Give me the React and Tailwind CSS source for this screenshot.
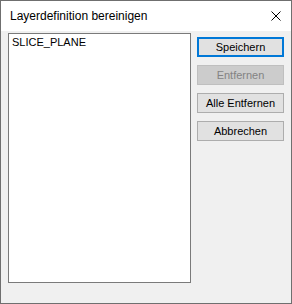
export default function App() {
  return (
    <div
      className="w-[292px] h-[304px] bg-[#f0f0f0] border border-[#6f6f6f] flex flex-col"
      style={{ fontFamily: '"Liberation Sans", Arial, sans-serif' }}
    >
      {/* Title bar */}
      <div className="h-[30px] bg-white flex items-center justify-between pl-[9px] pr-[9px]">
        <span className="text-[12px] text-black">Layerdefinition bereinigen</span>
        <svg width="10" height="10" viewBox="0 0 10 10" className="mr-[1px]">
          <path d="M0.5 0.5 L9.5 9.5 M9.5 0.5 L0.5 9.5" stroke="#000" strokeWidth="1" />
        </svg>
      </div>

      {/* Body */}
      <div className="flex pl-[7px] pt-[2px] gap-[6px]">
        <div className="w-[183px] h-[250px] bg-white border border-[#7a7a7a] px-[3px] pt-[2px]">
          <div className="text-[11px] leading-[13px] text-black">SLICE_PLANE</div>
        </div>

        <div className="flex flex-col gap-[8px] pt-[4px]">
          <button className="w-[87px] h-[20px] bg-[#e1e1e1] border-2 border-[#0078d7] text-[11px] text-black flex items-center justify-center">
            Speichern
          </button>
          <button className="w-[87px] h-[20px] bg-[#cccccc] border border-[#bfbfbf] text-[11px] text-[#838383] flex items-center justify-center">
            Entfernen
          </button>
          <button className="w-[87px] h-[20px] bg-[#e1e1e1] border border-[#adadad] text-[11px] text-black flex items-center justify-center">
            Alle Entfernen
          </button>
          <button className="w-[87px] h-[20px] bg-[#e1e1e1] border border-[#adadad] text-[11px] text-black flex items-center justify-center">
            Abbrechen
          </button>
        </div>
      </div>
    </div>
  );
}
